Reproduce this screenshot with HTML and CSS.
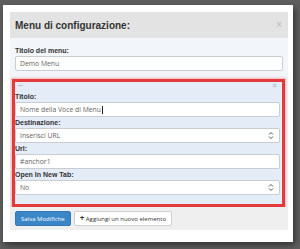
FILE: index.html
```
<!DOCTYPE html>
<html lang="it">
<head>
    <meta charset="UTF-8">
    <title>Menu di configurazione</title>
    <link rel="stylesheet" href="styles.css">
</head>
<body>
    <div class="modal">
        <div class="modal-header">
            <h1>Menu di configurazione:</h1>
            <span class="close">&times;</span>
        </div>

        <div class="modal-body">
            <label>Titolo del menu:</label>
            <div class="field">Demo Menu</div>

            <div class="item">
                <div class="item-bar">
                    <span class="handle">...</span>
                    <span class="close small">&times;</span>
                </div>

                <label>Titolo:</label>
                <div class="field">Nome della Voce di Menu<span class="caret"></span></div>

                <label>Destinazione:</label>
                <div class="field select">Inserisci URL
                    <svg class="arrows" width="6" height="9" viewBox="0 0 6 9"><path d="M1 3.5 L3 1.5 L5 3.5 M1 5.5 L3 7.5 L5 5.5" fill="none" stroke="#555" stroke-width="1"/></svg>
                </div>

                <label>Url:</label>
                <div class="field">#anchor1</div>

                <label>Open In New Tab:</label>
                <div class="field select">No
                    <svg class="arrows" width="6" height="9" viewBox="0 0 6 9"><path d="M1 3.5 L3 1.5 L5 3.5 M1 5.5 L3 7.5 L5 5.5" fill="none" stroke="#555" stroke-width="1"/></svg>
                </div>
            </div>
        </div>

        <div class="modal-footer">
            <button class="btn primary">Salva Modifiche</button>
            <button class="btn"><b>+</b> Aggiungi un nuovo elemento</button>
        </div>
    </div>
</body>
</html>
```

FILE: styles.css
```
*{
    margin: 0;
    padding: 0;
    box-sizing: border-box;
}

body{
    width: 300px;
    height: 249px;
    overflow: hidden;
    background-color: #5d5d5d;
    padding: 5px 0 0 3px;
    font-family: "Liberation Sans", Arial, sans-serif;
}

.modal{
    width: 290px;
    background-color: #fff;
    padding: 7px 5px 12px 7px;
    box-shadow: 2px 3px 6px rgba(0, 0, 0, 0.45);
}

.modal-header{
    height: 26px;
    background-color: #e3e3e3;
    padding: 0 6px 0 5px;
    display: flex;
    align-items: center;
    justify-content: space-between;

    h1{
        font-size: 10px;
        font-weight: 700;
        color: #333;
    }
}

.close{
    color: #c8c8c8;
    font-size: 10px;
    line-height: 1;
    font-weight: 700;

    &.small{
        color: #b9bfc8;
        font-size: 8px;
    }
}

.modal-body{
    background-color: #f2f5f9;
    padding: 7px 5px 0 5px;
}

label{
    display: block;
    font-size: 7px;
    font-weight: 700;
    line-height: 11px;
    color: #333;
}

.field{
    height: 15px;
    background-color: #fff;
    border: 1px solid #c9ccd0;
    border-radius: 2px;
    padding: 0 4px;
    display: flex;
    align-items: center;
    font-family: "Open Sans", sans-serif;
    font-size: 6.8px;
    color: #666;

    &.select{
        justify-content: space-between;
    }
}

.caret{
    display: inline-block;
    width: 1px;
    height: 8px;
    background-color: #222;
    margin-left: 1px;
}

.arrows{
    margin-right: 1px;
}

.item{
    margin: 8px -2px 0 -3px;
    padding: 0 2px 9px 0;
    border: 3px solid #e33b3b;
    box-shadow: 0 0 2px 1px rgba(235, 120, 120, 0.55);
    background-color: #e4ecf8;
}

.item-bar{
    height: 9px;
    display: flex;
    justify-content: space-between;
    align-items: flex-start;
    padding: 0 3px 0 3px;

    .handle{
        font-size: 7px;
        line-height: 4px;
        color: #666;
        letter-spacing: -0.5px;
    }
}

.modal-footer{
    background-color: #efefef;
    padding: 4px 5px 4px 5px;
    display: flex;
    gap: 3px;
}

.btn{
    height: 15px;
    padding: 0 5px;
    font-family: "Open Sans", sans-serif;
    font-size: 6px;
    color: #333;
    background-color: #fff;
    border: 1px solid #cfcfcf;
    border-radius: 2px;

    b{
        font-size: 8px;
        line-height: 1;
    }

    &.primary{
        background-color: #3b86c7;
        border-color: #3479b5;
        color: #fff;
    }
}
```
